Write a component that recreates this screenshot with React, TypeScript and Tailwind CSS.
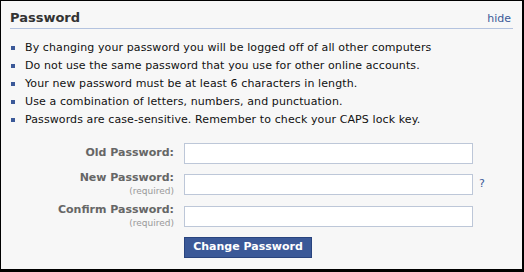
import React from 'react';

const tips = [
  'By changing your password you will be logged off of all other computers',
  'Do not use the same password that you use for other online accounts.',
  'Your new password must be at least 6 characters in length.',
  'Use a combination of letters, numbers, and punctuation.',
  'Passwords are case-sensitive. Remember to check your CAPS lock key.',
];

const fields = [
  { label: 'Old Password:', required: false, help: false, gap: 'mt-0' },
  { label: 'New Password:', required: true, help: true, gap: 'mt-[10px]' },
  { label: 'Confirm Password:', required: true, help: false, gap: 'mt-[11px]' },
];

export default function App() {
  return (
    <div className="h-[272px] w-[524px] overflow-hidden border-t border-l border-r-2 border-b-[3px] border-black bg-[#f7f7f7] text-[11px] text-[#333] [font-family:'DejaVu_Sans',sans-serif]">
      <div className="mx-[9px] mt-[8px] flex items-end justify-between border-b border-[#b4c3df] pb-[2px]">
        <h2 className="text-[13px] font-bold leading-[17px] text-[#333]">Password</h2>
        <a href="#" className="mr-[2px] text-[11px] leading-[15px] text-[#3b5998]">hide</a>
      </div>

      <ul className="mt-[10px] ml-[10px]">
        {tips.map((tip) => (
          <li key={tip} className="flex h-[18px] items-center">
            <span className="mr-[10px] h-[4px] w-[4px] bg-[#3b5998]" />
            <span className="tracking-[0.1px] text-[#111]">{tip}</span>
          </li>
        ))}
      </ul>

      <form className="mt-[14px] flex flex-col" onSubmit={(e) => e.preventDefault()}>
        {fields.map((f) => (
          <div key={f.label} className={`flex h-[21px] items-start ${f.gap}`}>
            <div className={`flex w-[173px] flex-col items-end ${f.required ? '-mt-[3px]' : 'pt-[3px]'}`}>
              <label className="font-bold leading-[14px] text-[#666]">{f.label}</label>
              {f.required && <span className="text-[9px] leading-[12px] text-[#999]">(required)</span>}
            </div>
            <input type="password" className="ml-[10px] h-[21px] w-[289px] border border-[#bdc7d8] bg-white px-1 outline-none" />
            {f.help && <a href="#" className="ml-[6px] mt-[3px] text-[11px] leading-[14px] text-[#3b5998]">?</a>}
          </div>
        ))}
        <div className="mt-[10px] pl-[183px]">
          <button type="submit" className="h-[21px] w-[128px] border border-[#29447e] bg-[#3b5998] text-[11px] font-bold text-white">
            Change Password
          </button>
        </div>
      </form>
    </div>
  );
}
